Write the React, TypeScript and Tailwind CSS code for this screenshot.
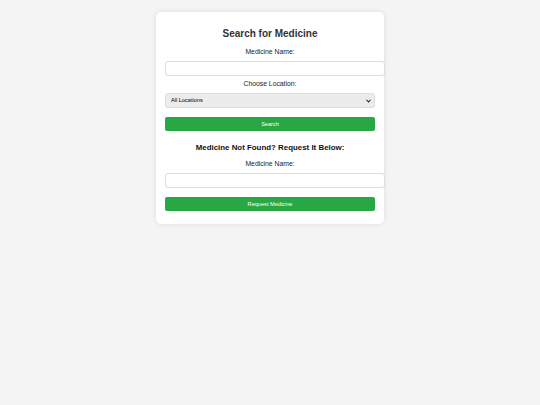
export default function App() {
  return (
    <div className="min-h-[405px] bg-[#f4f4f4] pt-[12px] font-['Liberation_Sans',Arial,sans-serif]">
      <div className="mx-auto w-[228px] rounded-[5px] bg-white px-[9px] pt-[16px] pb-[13px] shadow-[0_0_5px_rgba(0,0,0,0.1)]">
        <h2 className="text-center text-[10px] font-bold leading-[12px] text-[#333]">Search for Medicine</h2>

        <label className="mt-[8px] block text-center text-[6.8px] leading-[8px] text-[#222]">Medicine Name:</label>
        <input
          type="text"
          className="mt-[5px] box-content block h-[9px] w-[210px] rounded-[3px] border border-[#ddd] px-[4px] py-[2px] text-[6px] outline-none"
        />

        <label className="mt-[4px] block text-center text-[6.8px] leading-[8px] text-[#222]">Choose Location:</label>
        <div className="relative mt-[5px] w-[210px]">
          <select className="block h-[15px] w-[210px] appearance-none rounded-[3px] border border-[#ddd] bg-[#ececec] pl-[5px] text-[5.6px] text-black outline-none">
            <option>All Locations</option>
          </select>
          <svg
            className="pointer-events-none absolute right-[4px] top-[5.5px]"
            width="5"
            height="4"
            viewBox="0 0 10 8"
          >
            <path d="M1 1.5 L5 6 L9 1.5" fill="none" stroke="#222" strokeWidth="2.2" />
          </svg>
        </div>

        <button className="mt-[9px] block h-[14px] w-[210px] rounded-[2px] bg-[#28a745] text-[5.6px] leading-[14px] text-white">
          Search
        </button>

        <h3 className="mt-[12px] text-center text-[7.9px] font-bold leading-[10px] text-[#111]">
          Medicine Not Found? Request It Below:
        </h3>

        <label className="mt-[7px] block text-center text-[6.8px] leading-[8px] text-[#222]">Medicine Name:</label>
        <input
          type="text"
          className="mt-[5px] box-content block h-[9px] w-[210px] rounded-[3px] border border-[#ddd] px-[4px] py-[2px] text-[6px] outline-none"
        />

        <button className="mt-[9px] block h-[14px] w-[210px] rounded-[2px] bg-[#28a745] text-[5.6px] leading-[14px] text-white">
          Request Medicine
        </button>
      </div>
    </div>
  );
}
